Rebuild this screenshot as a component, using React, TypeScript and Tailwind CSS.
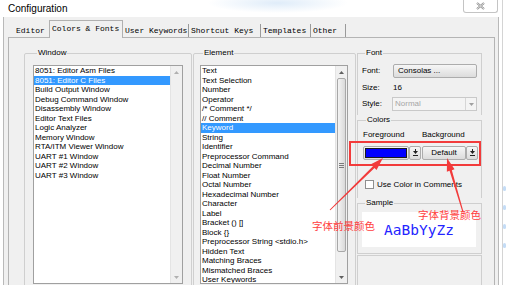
const windowItems = [
  '8051: Editor Asm Files',
  '8051: Editor C Files',
  'Build Output Window',
  'Debug Command Window',
  'Disassembly Window',
  'Editor Text Files',
  'Logic Analyzer',
  'Memory Window',
  'RTA/ITM Viewer Window',
  'UART #1 Window',
  'UART #2 Window',
  'UART #3 Window',
];

const elementItems = [
  'Text',
  'Text Selection',
  'Number',
  'Operator',
  '/* Comment */',
  '// Comment',
  'Keyword',
  'String',
  'Identifier',
  'Preprocessor Command',
  'Decimal Number',
  'Float Number',
  'Octal Number',
  'Hexadecimal Number',
  'Character',
  'Label',
  'Bracket () []',
  'Block {}',
  'Preprocessor String <stdio.h>',
  'Hidden Text',
  'Matching Braces',
  'Mismatched Braces',
  'User Keywords',
];

function Tri({ up, color }: { up?: boolean; color: string }) {
  return (
    <svg width="5" height="3" viewBox="0 0 5 3">
      <polygon points={up ? '0,3 5,3 2.5,0' : '0,0 5,0 2.5,3'} fill={color} />
    </svg>
  );
}

function DropGlyph() {
  return (
    <svg width="5" height="8" viewBox="0 0 5 8">
      <rect x="2" y="0" width="1" height="2" fill="#222" />
      <polygon points="0,2 5,2 2.5,5" fill="#222" />
      <rect x="0" y="6" width="5" height="1" fill="#222" />
    </svg>
  );
}

function ListBox({ items, selected, thumb }: { items: string[]; selected: number; thumb?: boolean }) {
  const arrow = thumb ? '#606060' : '#b0b0b0';
  return (
    <div className="flex h-[219px] border border-[#a0a0a0] bg-white">
      <div className="flex-1 overflow-hidden">
        {items.map((it, i) => (
          <div
            key={it}
            className={
              i === selected
                ? 'h-[9.5px] whitespace-nowrap bg-[#3399ff] pl-[1px] leading-[9.5px] text-white'
                : 'h-[9.5px] whitespace-nowrap pl-[1px] leading-[9.5px]'
            }
          >
            {it}
          </div>
        ))}
      </div>
      <div className="flex w-[12px] flex-col border-l border-[#e4e4e4] bg-[#f0f0f0]">
        <div className="flex h-[12px] items-center justify-center">
          <Tri up color={arrow} />
        </div>
        {thumb && (
          <div className="mx-[1px] flex h-[174px] flex-col items-center justify-center gap-[1px] rounded-[2px] border border-[#a8a8a8] bg-gradient-to-r from-[#f4f4f4] to-[#d9d9d9]">
            <div className="h-[1px] w-[5px] bg-[#7a7a7a]" />
            <div className="h-[1px] w-[5px] bg-[#7a7a7a]" />
            <div className="h-[1px] w-[5px] bg-[#7a7a7a]" />
          </div>
        )}
        <div className="flex-1" />
        <div className="flex h-[12px] items-center justify-center">
          <Tri color={arrow} />
        </div>
      </div>
    </div>
  );
}

const btn = 'rounded-[2px] border border-[#acacac] bg-gradient-to-b from-[#f6f6f6] to-[#dcdcdc]';

export default function App() {
  return (
    <div className="relative flex h-[285px] w-[506px] overflow-hidden bg-white font-['Liberation_Sans',Arial,sans-serif] text-[8px] leading-[10px] text-black">
      <div className="ml-[3px] flex h-[330px] w-[496px] shrink-0 flex-col">
        {/* title bar */}
        <div className="flex h-[17px] shrink-0 items-start bg-[radial-gradient(ellipse_70px_10px_at_275px_3px,#dfecf9,transparent)]">
          <span className="ml-[5px] mt-[3px] text-[10px] leading-[12px]">Configuration</span>
          <div className="ml-auto mr-[1px] flex h-[13px] w-[35px] items-center justify-center rounded-b-[3px] border border-t-0 border-[#c4c4c4] bg-white">
            <svg width="9" height="8" viewBox="0 0 9 8">
              <path d="M1 1 L8 7 M8 1 L1 7" stroke="#8a8a8a" strokeWidth="2" />
              <path d="M1 1 L8 7 M8 1 L1 7" stroke="#fff" strokeWidth="0.7" />
            </svg>
          </div>
        </div>

        {/* client */}
        <div className="flex flex-1 flex-col border-x border-[#b9b9b9] bg-[#f0f0f0] pl-[4px] pr-[3px] pt-[3px]">
          {/* tabs */}
          <div className="flex h-[17px] shrink-0 items-end whitespace-nowrap font-['Liberation_Mono',monospace] text-[8px]">
            <div className="flex h-[13px] w-[41px] items-center pl-[8px]">Editor</div>
            <div className="relative z-10 -mb-[1px] flex h-[18px] w-[74px] items-center border-x border-t border-[#b0b0b0] bg-[#f0f0f0] pb-[1px] pl-[2px]">
              Colors &amp; Fonts
            </div>
            <div className="flex h-[13px] w-[66px] items-center overflow-hidden border-r border-[#9a9a9a] pl-[2px]">User Keywords</div>
            <div className="flex h-[13px] w-[72px] items-center border-r border-[#9a9a9a] pl-[2px]">Shortcut Keys</div>
            <div className="flex h-[13px] w-[50px] items-center border-r border-[#9a9a9a] pl-[2px]">Templates</div>
            <div className="flex h-[13px] w-[35px] items-center border-r border-[#9a9a9a] pl-[2px]">Other</div>
          </div>

          {/* panel */}
          <div className="flex flex-1 border border-[#b4b4b4] bg-[#f0f0f0] pl-[15px] pt-[10px]">
            <fieldset className="w-[168px] rounded-[2px] border border-[#cfcfcf] pl-[8px] pt-[7px]">
              <legend className="ml-[4px] px-[1px] leading-[10px]">Window</legend>
              <div className="w-[150px]">
                <ListBox items={windowItems} selected={1} />
              </div>
            </fieldset>

            <fieldset className="ml-[1px] w-[163px] rounded-[2px] border border-[#cfcfcf] pl-[6px] pt-[7px]">
              <legend className="ml-[3px] px-[1px] leading-[10px]">Element</legend>
              <div className="w-[148px]">
                <ListBox items={elementItems} selected={6} thumb />
              </div>
            </fieldset>

            <div className="ml-[1px] flex w-[125px] flex-col">
              <fieldset className="border border-b-0 border-[#cfcfcf] pb-[4px] pl-[4px] pt-[6px]">
                <legend className="ml-[3px] px-[1px] leading-[10px]">Font</legend>
                <div className="flex h-[14px] items-center">
                  <span className="w-[31px]">Font:</span>
                  <div className={`${btn} flex h-[14px] w-[84px] items-center pl-[4px]`}>Consolas ...</div>
                </div>
                <div className="mt-[5px] flex h-[10px] items-center">
                  <span className="w-[31px]">Size:</span>
                  <span>16</span>
                </div>
                <div className="mt-[4px] flex h-[14px] items-center">
                  <span className="w-[30px]">Style:</span>
                  <div className="flex h-[14px] w-[85px] items-center border border-[#c9c9c9] bg-[#f4f4f4] text-[#a6a6a6]">
                    <span className="flex-1 pl-[2px]">Normal</span>
                    <div className="flex h-full w-[11px] items-center justify-center border-l border-[#d6d6d6]">
                      <Tri color="#a0a0a0" />
                    </div>
                  </div>
                </div>
              </fieldset>

              <fieldset className="border border-b-0 border-[#cfcfcf] pb-[9px] pl-[5px] pt-[5px]">
                <legend className="ml-[3px] px-[1px] leading-[10px]">Colors</legend>
                <div className="flex h-[10px] items-center">
                  <span className="w-[59px]">Foreground</span>
                  <span>Background</span>
                </div>
                <div className="mt-[6px] flex h-[14px]">
                  <div className={`${btn} flex w-[46px] items-center p-[1px]`}>
                    <div className="h-[10px] flex-1 border border-[#1a1a1a] bg-[#0000ff]" />
                  </div>
                  <div className={`${btn} flex w-[12px] items-center justify-center`}>
                    <DropGlyph />
                  </div>
                  <div className={`${btn} ml-[1px] flex w-[44px] items-center justify-center`}>Default</div>
                  <div className={`${btn} flex w-[12px] items-center justify-center`}>
                    <DropGlyph />
                  </div>
                </div>
                <div className="mt-[20px] flex h-[9px] items-center">
                  <div className="ml-[2px] h-[9px] w-[9px] border border-[#8e8f8f] bg-white" />
                  <span className="ml-[3px]">Use Color in Comments</span>
                </div>
              </fieldset>

              <fieldset className="border border-[#cfcfcf] pb-[6px] pl-[4px] pt-[4px]">
                <legend className="ml-[3px] px-[1px] leading-[10px]">Sample</legend>
                <div className="flex h-[35px] w-[114px] items-center justify-center bg-white font-['DejaVu_Sans_Mono',monospace] text-[14.5px] leading-[16px] text-[#2424ff]">
                  AaBbYyZz
                </div>
              </fieldset>

              <div className="mt-[1px] h-[60px] border-x border-t border-[#cfcfcf]" />
            </div>
          </div>
        </div>
      </div>

      {/* right edge behind the window */}
      <div className="ml-[3px] flex flex-1 flex-col gap-[14px] border-l border-[#d4d4d4] pt-[186px]">
        <div className="h-[5px] w-[3px] rounded-full bg-[#c4dcf6]" />
        <div className="h-[5px] w-[3px] rounded-full bg-[#c4dcf6]" />
        <div className="h-[5px] w-[3px] rounded-full bg-[#c4dcf6]" />
        <div className="h-[5px] w-[3px] rounded-full bg-[#c4dcf6]" />
      </div>

      {/* annotations */}
      <div className="absolute left-[349px] top-[141px] h-[25px] w-[132px] border-2 border-[#f23b3b]" />
      <svg className="pointer-events-none absolute left-0 top-0" width="506" height="285" viewBox="0 0 506 285">
        <polygon
          points="330.35,210.36 374.5,168 376.5,170 383,158 370.9,164.2 372.9,166.2 329.65,209.64"
          fill="#f23b3b"
        />
        <polygon
          points="463.48,211.86 451.85,170.16 454.54,169.36 447,158 446.86,171.64 449.55,170.84 462.52,212.14"
          fill="#f23b3b"
        />
      </svg>
      <span className="absolute left-[312px] top-[220px] whitespace-nowrap font-['Noto_Sans_CJK_SC',sans-serif] text-[10.5px] leading-[12px] text-[#ff3d3d]">
        字体前景颜色
      </span>
      <span className="absolute left-[418px] top-[209px] whitespace-nowrap font-['Noto_Sans_CJK_SC',sans-serif] text-[10.5px] leading-[12px] text-[#ff3d3d]">
        字体背景颜色
      </span>
    </div>
  );
}
